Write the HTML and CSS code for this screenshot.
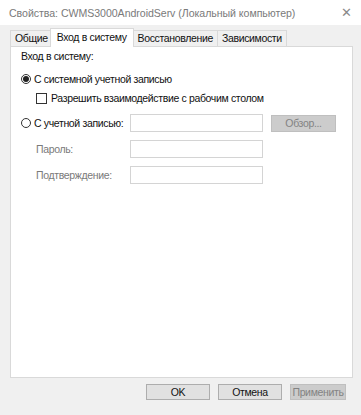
FILE: index.html
```html
<!doctype html>
<html lang="ru">
<head>
<meta charset="utf-8">
<title>Свойства</title>
<link rel="stylesheet" href="styles.css">
</head>
<body>
<div class="window">
  <div class="titlebar">
    <span class="title">Свойства: CWMS3000AndroidServ (Локальный компьютер)</span>
    <span class="close">✕</span>
  </div>
  <div class="tabs">
    <span class="tab">Общие</span>
    <span class="tab active">Вход в систему</span>
    <span class="tab">Восстановление</span>
    <span class="tab">Зависимости</span>
  </div>
  <div class="panel">
    <div class="heading">Вход в систему:</div>
    <label class="option"><span class="radio checked"></span>С системной учетной записью</label>
    <label class="option sub"><span class="check"></span>Разрешить взаимодействие с рабочим столом</label>
    <div class="account">
      <label class="option"><span class="radio"></span>С учетной записью:</label>
      <span class="field"></span>
      <span class="btn disabled">Обзор...</span>
      <span class="dim">Пароль:</span>
      <span class="field"></span>
      <span></span>
      <span class="dim">Подтверждение:</span>
      <span class="field"></span>
      <span></span>
    </div>
  </div>
  <div class="footer">
    <span class="btn">OK</span>
    <span class="btn">Отмена</span>
    <span class="btn disabled">Применить</span>
  </div>
</div>
</body>
</html>
```
FILE: styles.css
```css
body {
  margin: 0;
  background: #f0f0f0;
  font-family: "Liberation Sans", Arial, sans-serif;
  font-size: 10.5px;
  letter-spacing: -0.35px;
  line-height: 14px;
  color: #111;
}
.window {
  width: 361px;
  height: 415px;
  display: flex;
  flex-direction: column;
}
.titlebar {
  height: 25px;
  flex: none;
  background: #fff;
  display: flex;
  align-items: center;
  justify-content: space-between;
  padding: 0 9px;
  color: #7a7a7a;
  font-size: 10.6px;
  letter-spacing: -0.05px;
  white-space: nowrap;
}
.close { font-size: 13px; color: #8a8a8a; }
.tabs {
  display: flex;
  align-items: flex-end;
  margin: 3px 8px 0 10px;
  height: 18px;
  flex: none;
}
.tab {
  border: 1px solid #d9d9d9;
  border-bottom: none;
  padding: 0 4px;
  height: 15px;
  margin-right: -1px;
  background: #f0f0f0;
  white-space: nowrap;
}
.tab.active {
  background: #fff;
  height: 19px;
  margin: 0 -1px -1px -2px;
  padding: 1px 6px 0;
  box-sizing: border-box;
  position: relative;
  z-index: 1;
}
.panel {
  flex: none;
  margin: 0 8px 0 10px;
  background: #fff;
  border: 1px solid #d9d9d9;
  height: 332px;
  box-sizing: border-box;
  padding: 2px 10px;
}
.heading { margin-bottom: 8px; }
.option {
  display: flex;
  align-items: center;
  gap: 3px;
  height: 16px;
  white-space: nowrap;
}
.option.sub { margin: 3px 0 0 15px; gap: 4px; }
.radio {
  flex: none;
  width: 10px;
  height: 10px;
  border: 1px solid #333;
  border-radius: 50%;
  box-sizing: border-box;
  display: flex;
  align-items: center;
  justify-content: center;
}
.radio.checked::after {
  content: "";
  width: 6px;
  height: 6px;
  border-radius: 50%;
  background: #222;
}
.check {
  flex: none;
  width: 11px;
  height: 11px;
  border: 1px solid #333;
  box-sizing: border-box;
}
.account {
  display: grid;
  grid-template-columns: 101px 133px 65px;
  grid-auto-rows: 18px;
  column-gap: 8px;
  row-gap: 8px;
  align-items: center;
  margin-top: 8px;
}
.field {
  height: 18px;
  border: 1px solid #d4d4d4;
  box-sizing: border-box;
}
.dim { color: #7a7a7a; padding-left: 15px; white-space: nowrap; }
.btn {
  height: 17px;
  box-sizing: border-box;
  border: 1px solid #adadad;
  background: #e1e1e1;
  text-align: center;
  line-height: 15px;
  width: 65px;
}
.btn.disabled {
  border-color: #bfbfbf;
  background: #cccccc;
  color: #838383;
}
.footer {
  display: flex;
  justify-content: flex-end;
  gap: 8px;
  margin: 6px 15px 0 0;
}
.footer .btn { height: 16px; line-height: 14px; width: 64px; }
.footer .btn.disabled { width: 56px; }
```
